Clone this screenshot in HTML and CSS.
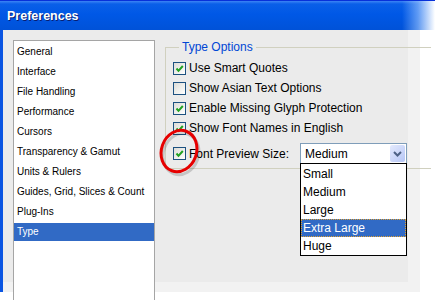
FILE: index.html
```html
<!DOCTYPE html>
<html lang="en">
<head>
    <meta charset="UTF-8">
    <title>Preferences</title>
    <link rel="stylesheet" href="styles.css">
</head>
<body>
    <div class="window">
        <div class="titlebar">
            <span class="title">Preferences</span>
        </div>

        <div class="frame">
            <div class="client">
                <ul class="categories">
                    <li>General</li>
                    <li>Interface</li>
                    <li>File Handling</li>
                    <li>Performance</li>
                    <li>Cursors</li>
                    <li>Transparency &amp; Gamut</li>
                    <li>Units &amp; Rulers</li>
                    <li>Guides, Grid, Slices &amp; Count</li>
                    <li>Plug-Ins</li>
                    <li class="selected">Type</li>
                </ul>

                <fieldset class="group">
                    <legend>Type Options</legend>
                    <div class="row">
                        <span class="check on"><svg viewBox="0 0 11 11"><path d="M2.5 5.5 L4.5 7.8 L8.8 3"/></svg></span>
                        <span class="label">Use Smart Quotes</span>
                    </div>
                    <div class="row">
                        <span class="check"></span>
                        <span class="label">Show Asian Text Options</span>
                    </div>
                    <div class="row">
                        <span class="check on"><svg viewBox="0 0 11 11"><path d="M2.5 5.5 L4.5 7.8 L8.8 3"/></svg></span>
                        <span class="label">Enable Missing Glyph Protection</span>
                    </div>
                    <div class="row">
                        <span class="check on"><svg viewBox="0 0 11 11"><path d="M2.5 5.5 L4.5 7.8 L8.8 3"/></svg></span>
                        <span class="label">Show Font Names in English</span>
                    </div>
                    <div class="row size-row">
                        <span class="check on"><svg viewBox="0 0 11 11"><path d="M2.5 5.5 L4.5 7.8 L8.8 3"/></svg></span>
                        <span class="label size-label">Font Preview Size:</span>
                        <div class="select">
                            <span class="value">Medium</span>
                            <span class="arrow"><svg viewBox="0 0 15 17"><path d="M4 7 L7.5 10.5 L11 7"/></svg></span>
                        </div>
                    </div>
                </fieldset>
            </div>
        </div>

        <ul class="dropdown">
            <li>Small</li>
            <li>Medium</li>
            <li>Large</li>
            <li class="selected">Extra Large</li>
            <li>Huge</li>
        </ul>

        <!-- hand-drawn highlight around the checkbox -->
        <svg class="annotation" width="52" height="60" viewBox="0 0 52 60">
            <ellipse class="shadow" cx="27" cy="29" rx="17.5" ry="21" transform="rotate(20 27 29)"/>
            <ellipse class="ring" cx="25" cy="26" rx="17.5" ry="21" transform="rotate(20 25 26)"/>
        </svg>
    </div>
</body>
</html>
```

FILE: styles.css
```css
body {
    margin: 0;
    background-color: #fff;
    font-family: "Liberation Sans", Arial, sans-serif;
}
.window {
    position: relative;
    width: 435px;
    height: 300px;
    overflow: hidden;
}
.titlebar {
    height: 30px;
    box-sizing: border-box;
    border-top: 1px solid #0831d9;
    background:
        linear-gradient(to right, rgba(255,255,255,0) 0, rgba(255,255,255,0) 402px, rgba(160,200,255,0.6) 418px, #fff 435px),
        linear-gradient(#3c84f5 0, #0a5fe8 3px, #0058e6 45%, #0052d8 100%);
    display: flex;
    align-items: center;
    padding-left: 7px;
}
.title {
    color: #fff;
    font-size: 12.5px;
    font-weight: bold;
    text-shadow: 1px 1px 0 #0a1e70;
}
.frame {
    width: 417px;
    padding-bottom: 10px;
    border-left: 3px solid #0a55e2;
    background-color: #f2f2f2;
}
.client {
    width: 405px;
    height: 252px;
    background-color: #ebebeb;
    display: flex;
    align-items: flex-start;
}
.categories {
    list-style: none;
    margin: 10px 0 0 10px;
    padding: 2px 0 0;
    width: 140px;
    height: 270px;
    flex-shrink: 0;
    background-color: #fff;
    border: 1px solid #a5a5a5;
    font-size: 10px;
    color: #000;
}
.categories li {
    height: 18px;
    line-height: 18px;
    margin-bottom: 2px;
    padding-left: 3px;
    white-space: nowrap;
}
.categories li.selected {
    background-color: #316ac5;
    color: #fff;
}
.group {
    margin: 10px 0 0 10px;
    padding: 0 0 4px 7px;
    width: 258px;
    flex-shrink: 0;
    border: 1px solid #d0d0bf;
    border-right: none;
    font-size: 12px;
    color: #000;
}
.group legend {
    margin-left: 6px;
    padding: 0 3px;
    color: #0046d5;
    font-size: 12px;
    line-height: 15px;
}
.row {
    display: flex;
    align-items: center;
    height: 20px;
}
.row:first-of-type {
    margin-top: 3px;
}
.check {
    width: 11px;
    height: 11px;
    border: 1px solid #1c5180;
    background: linear-gradient(135deg, #dcdcd7, #fff);
    display: flex;
    flex-shrink: 0;
}
.check svg {
    width: 11px;
    height: 11px;
    fill: none;
    stroke: #21a121;
    stroke-width: 2;
}
.label {
    margin-left: 3px;
    white-space: nowrap;
}
.size-row {
    height: 21px;
    margin-top: 5px;
}
.size-label {
    width: 111px;
}
.select {
    width: 105px;
    height: 19px;
    border: 1px solid #7f9db9;
    background-color: #fff;
    display: flex;
    align-items: center;
    justify-content: space-between;
}
.select .value {
    padding-left: 4px;
}
.arrow {
    width: 15px;
    height: 17px;
    margin-right: 1px;
    border-radius: 2px;
    background: linear-gradient(135deg, #e4eafd, #b6c6f6);
    display: flex;
}
.arrow svg {
    width: 15px;
    height: 17px;
    fill: none;
    stroke: #4d6185;
    stroke-width: 2;
}
.dropdown {
    position: absolute;
    left: 300px;
    top: 163px;
    width: 105px;
    margin: 0;
    padding: 1px 0 0;
    list-style: none;
    background-color: #fff;
    border: 1px solid #000;
    font-size: 12px;
}
.dropdown li {
    height: 18px;
    line-height: 18px;
    padding-left: 2px;
    box-sizing: border-box;
}
.dropdown li.selected {
    background-color: #316ac5;
    color: #fff;
    border: 1px dotted #e0a030;
    line-height: 16px;
    padding-left: 1px;
}
.annotation {
    position: absolute;
    left: 154px;
    top: 125px;
}
.annotation ellipse {
    fill: none;
}
.annotation .ring {
    stroke: #e60000;
    stroke-width: 3;
}
.annotation .shadow {
    stroke: rgba(0,0,0,0.16);
    stroke-width: 3;
}
```
